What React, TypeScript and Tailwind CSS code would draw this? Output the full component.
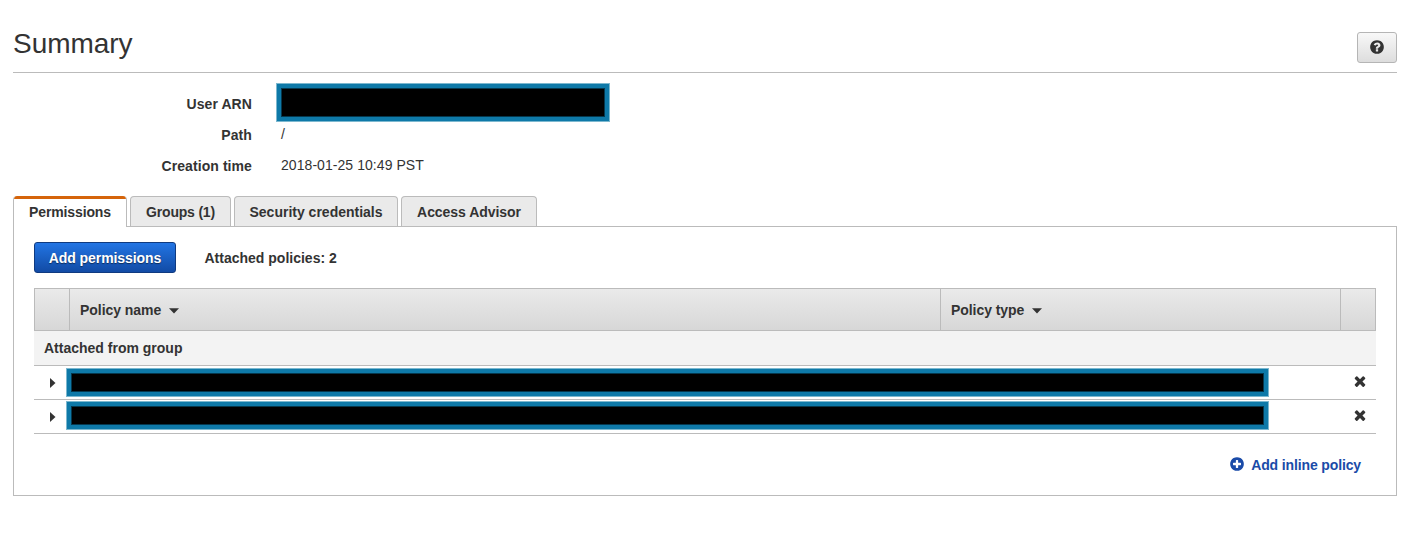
import React from "react";

const CIRCLE =
  "M1664 896q0 209-103 385.5t-279.5 279.5-385.5 103-385.5-103-279.5-279.5-103-385.5 103-385.5 279.5-279.5 385.5-103 385.5 103 279.5 279.5 103 385.5z";
const QUESTION =
  "M1024 1376v-192q0-14-9-23t-23-9h-192q-14 0-23 9t-9 23v192q0 14 9 23t23 9h192q14 0 23-9t9-23zm256-672q0-88-55.5-163t-138.5-116-170-41q-243 0-371 213-15 24 8 42l132 100q7 6 19 6 16 0 25-12 53-68 86-92 34-24 86-24 48 0 85.5 26t37.5 59q0 38-20 61t-68 45q-63 28-115.5 86.5t-52.5 125.5v36q0 14 9 23t23 9h192q14 0 23-9t9-23q0-19 21.5-49.5t54.5-49.5q32-18 49-28.5t46-35 44.5-48 28-60.5 12.5-81z";
const PLUS =
  "M1344 960v-128q0-26-19-45t-45-19h-256v-256q0-26-19-45t-45-19h-128q-26 0-45 19t-19 45v256h-256q-26 0-45 19t-19 45v128q0 26 19 45t45 19h256v256q0 26 19 45t45 19h128q26 0 45-19t19-45v-256h256q26 0 45-19t19-45z";
const TIMES =
  "M1490 1322q0 40-28 68l-136 136q-28 28-68 28t-68-28l-294-294-294 294q-28 28-68 28t-68-28l-136-136q-28-28-28-68t28-68l294-294-294-294q-28-28-28-68t28-68l136-136q28-28 68-28t68 28l294 294 294-294q28-28 68-28t68 28l136 136q28 28 28 68t-28 68l-294 294 294 294q28 28 28 68z";

function Icon({ d, className }: { d: string; className: string }) {
  return (
    <svg viewBox="0 0 1792 1792" fill="currentColor" fillRule="evenodd" className={className}>
      <path d={d} />
    </svg>
  );
}

function Redacted({ className }: { className: string }) {
  return (
    <div className={`shrink-0 border border-[#7cb8cf] ${className}`}>
      <div className="h-full border-4 border-[#0e79a8] bg-black shadow-[inset_0_0_0_1px_#05384e]" />
    </div>
  );
}

function Detail({ label, children }: { label: string; children: React.ReactNode }) {
  return (
    <div className="flex h-[31px] items-center">
      <div className="w-[239px] text-right font-bold tracking-[0.08px]">{label}</div>
      {children}
    </div>
  );
}

function Caret() {
  return (
    <svg viewBox="0 0 10 6" fill="currentColor" className="mt-0.5 ml-2 h-1.5 w-2.5">
      <path d="M0 .3h10L5 5.6z" />
    </svg>
  );
}

function Tab({ label, className }: { label: string; className: string }) {
  return (
    <div
      className={`flex h-[30px] items-center justify-center rounded-t-[4px] border border-b-0 border-[#bbb] bg-[#eaeaea] pt-px ${className}`}
    >
      {label}
    </div>
  );
}

function PolicyRow({ barClass }: { barClass: string }) {
  return (
    <div className="flex h-[34px] items-start border-b border-[#bbb]">
      <svg viewBox="0 0 6 10" fill="currentColor" className="mt-3 ml-4 h-2.5 w-1.5">
        <path d="M0 0v10l5.5-5z" />
      </svg>
      <Redacted className={`ml-2.5 h-[29px] w-[1203px] ${barClass}`} />
      <Icon d={TIMES} className="mt-[7px] ml-[83px] size-4" />
    </div>
  );
}

export default function App() {
  return (
    <div className="h-[543px] w-[1413px] bg-white pr-4 pl-[13px] font-['Liberation_Sans',sans-serif] text-sm text-[#333]">
      <header className="flex h-[73px] items-end justify-between border-b border-[#bbb]">
        <h1 className="mb-3 text-[28px] leading-8 tracking-[-0.05px]">Summary</h1>
        <button className="mb-[9px] flex h-[31px] w-10 items-center justify-center rounded-[3px] border border-[#b5b5b5] bg-linear-to-b from-[#f8f8f8] to-[#dddddd]">
          <Icon d={CIRCLE + QUESTION} className="-mt-0.5 size-4" />
        </button>
      </header>

      <section className="h-[123px] pt-[15px]">
        <Detail label="User ARN">
          <Redacted className="-mt-0.5 ml-6 h-[39px] w-[334px]" />
        </Detail>
        <Detail label="Path">
          <div className="-mt-0.5 ml-[29px]">/</div>
        </Detail>
        <Detail label="Creation time">
          <div className="-mt-0.5 ml-[29px] tracking-[0.06px]">2018-01-25 10:49 PST</div>
        </Detail>
      </section>

      <nav className="flex h-[30px] gap-[3px] font-bold">
        <div className="relative z-10 flex h-[31px] w-[114px] items-center justify-center overflow-hidden rounded-t-[4px] border-x border-[#bbb] bg-white tracking-[-0.12px]">
          <div className="absolute inset-x-0 top-0 h-[3px] bg-[#d5640a]" />
          Permissions
        </div>
        <Tab label="Groups (1)" className="w-[101px] tracking-[-0.2px]" />
        <Tab label="Security credentials" className="w-[164px]" />
        <Tab label="Access Advisor" className="w-[136px] tracking-[-0.05px]" />
      </nav>

      <main className="h-[270px] border border-[#bbb] px-5 pt-[15px]">
        <div className="flex items-center font-bold">
          <button className="h-[31px] w-[142px] rounded-[3px] border border-[#0f3a80] bg-linear-to-b from-[#2275e4] to-[#124ba5] tracking-[-0.08px] text-white [text-shadow:0_1px_1px_rgba(0,0,0,0.5)]">
            Add permissions
          </button>
          <span className="ml-[28.5px]">Attached policies: 2</span>
        </div>

        <div className="mt-[15px]">
          <div className="flex h-[43px] border border-[#bbb] bg-linear-to-b from-[#eaeaea] to-[#d7d7d7] font-bold">
            <div className="w-[35px] border-r border-[#bbb]" />
            <div className="flex w-[871px] items-center border-r border-[#bbb] pl-2.5">
              <span className="tracking-[-0.04px]">Policy name</span>
              <Caret />
            </div>
            <div className="flex w-[400px] items-center border-r border-[#bbb] pl-2.5">
              <span className="tracking-[-0.06px]">Policy type</span>
              <Caret />
            </div>
          </div>
          <div className="flex h-[35px] items-center border-b border-[#bbb] bg-[#f3f3f3] pl-2.5 font-bold">
            Attached from group
          </div>
          <PolicyRow barClass="mt-0.5" />
          <PolicyRow barClass="mt-px" />
        </div>

        <div className="mt-[21px] flex items-center justify-end pr-[15px] font-bold tracking-[-0.13px] text-[#1a4ba8]">
          <Icon d={CIRCLE + PLUS} className="-mt-0.5 mr-1.5 size-4" />
          Add inline policy
        </div>
      </main>
    </div>
  );
}
